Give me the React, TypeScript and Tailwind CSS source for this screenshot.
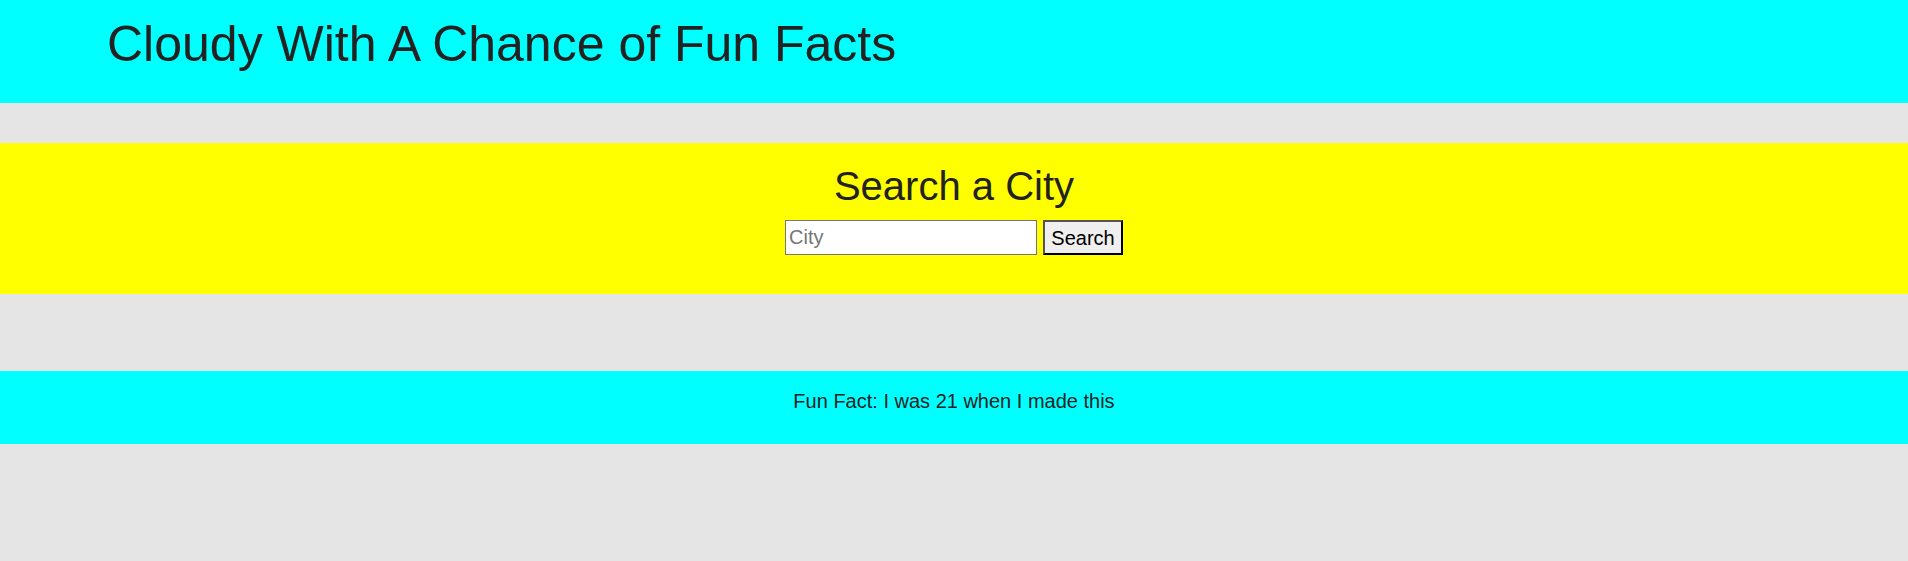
import React from 'react'

export default function App() {
  return (
    <div className="min-h-[561px] bg-[#e5e5e5] font-['Liberation_Sans',Arial,sans-serif] text-[#222]">
      <header className="h-[103px] bg-[#00ffff] pt-[19px] pl-[107px]">
        <h1 className="text-[50px] leading-none font-normal">Cloudy With A Chance of Fun Facts</h1>
      </header>

      <section className="mt-[40px] h-[151px] bg-[#ffff00] pt-[23px] flex flex-col items-center">
        <h2 className="text-[40px] leading-none font-normal">Search a City</h2>
        <form className="mt-[14px] flex gap-[6px]" onSubmit={(e) => e.preventDefault()}>
          <input
            type="text"
            placeholder="City"
            className="w-[252px] h-[35px] bg-white border border-[#767676] px-[3px] text-[20px] text-black placeholder:text-[#757575] outline-none"
          />
          <button
            type="submit"
            className="w-[80px] h-[35px] bg-[#efefef] border-2 border-t-[#555] border-l-[#555] border-b-black border-r-black text-[20px] text-black leading-none"
          >
            Search
          </button>
        </form>
      </section>

      <footer className="mt-[77px] h-[73px] bg-[#00ffff] pt-[20px] text-center">
        <p className="text-[20px] leading-none">Fun Fact: I was 21 when I made this</p>
      </footer>
    </div>
  )
}
